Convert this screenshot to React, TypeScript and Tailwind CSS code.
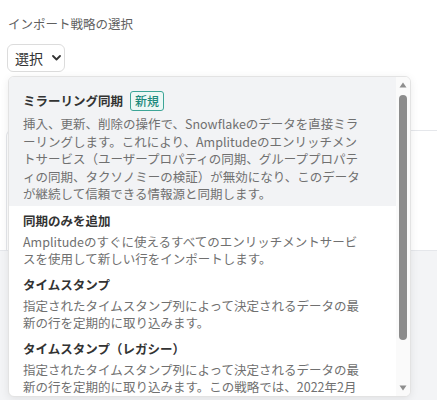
const strategies = [
  {
    id: "mirror",
    name: "ミラーリング同期",
    badge: "新規",
    description:
      "挿入、更新、削除の操作で、Snowflakeのデータを直接ミラーリングします。これにより、Amplitudeのエンリッチメントサービス（ユーザープロパティの同期、グループプロパティの同期、タクソノミーの検証）が無効になり、このデータが継続して信頼できる情報源と同期します。",
  },
  {
    id: "append",
    name: "同期のみを追加",
    description:
      "Amplitudeのすぐに使えるすべてのエンリッチメントサービスを使用して新しい行をインポートします。",
  },
  {
    id: "timestamp",
    name: "タイムスタンプ",
    description:
      "指定されたタイムスタンプ列によって決定されるデータの最新の行を定期的に取り込みます。",
  },
  {
    id: "legacy",
    name: "タイムスタンプ（レガシー）",
    description:
      "指定されたタイムスタンプ列によって決定されるデータの最新の行を定期的に取り込みます。この戦略では、2022年2月以前に作成されたインポートと同じように動作します。",
  },
];

const Arrow = ({ down }: { down?: boolean }) => (
  <svg width="8" height="6" viewBox="0 0 8 6" className="shrink-0">
    <path d={down ? "M0.5 0.5h7L4 5.5z" : "M0.5 5.5h7L4 0.5z"} fill="#8e8e8e" />
  </svg>
);

export default function App() {
  return (
    <div className="min-h-[400px] bg-white font-['Noto_Sans_CJK_JP',sans-serif] text-[#333]">
      <div className="px-2 pt-[15px]">
        <p className="text-[12.5px] leading-[18px] text-[#5f5f5f]">
          インポート戦略の選択
        </p>
        <div className="relative mt-[11px] inline-block -ml-px">
          <button className="flex h-[28px] w-[58px] items-center gap-[9px] rounded-md border border-[#dcdcdc] bg-white pl-[7px] text-[14px] text-[#333]">
            選択
            <svg width="9" height="6" viewBox="0 0 9 6" fill="none">
              <path
                d="M1 1l3.5 3.5L8 1"
                stroke="#333"
                strokeWidth="1.8"
                strokeLinecap="round"
                strokeLinejoin="round"
              />
            </svg>
          </button>

          <div className="absolute left-px top-full z-10 mt-1 flex h-[321px] w-[403px] overflow-hidden rounded-md border border-[#e3e3e3] bg-white shadow-[0_2px_8px_rgba(0,0,0,0.08)]">
            <div className="flex-1 overflow-hidden">
              {strategies.map((item, i) => (
                <div
                  key={item.id}
                  className={
                    i === 0
                      ? "bg-[#f2f3f5] px-[14px] pb-[3px] pt-[12px]"
                      : "px-[14px] pb-[2px] pt-[5px]"
                  }
                >
                  <div
                    className={
                      i === 0
                        ? "flex h-[24px] items-center gap-[7px]"
                        : "flex h-[20px] items-center gap-[7px]"
                    }
                  >
                    <span className="text-[12.5px] font-bold leading-[20px] text-[#333]">
                      {item.name}
                    </span>
                    {item.badge && (
                      <span className="rounded-[3px] border border-[#3da597] bg-[#ecf8f5] px-[4px] text-[12px] font-medium leading-[18px] text-[#1d8a7c]">
                        {item.badge}
                      </span>
                    )}
                  </div>
                  <p className="mt-[2px] w-[340px] text-[12.5px] leading-[17.5px] text-[#707070]">
                    {item.description}
                  </p>
                </div>
              ))}
            </div>

            <div className="flex w-[14px] flex-col items-center bg-[#fafafa] pb-[5px] pt-[5px]">
              <Arrow />
              <div className="mt-[7px] h-[245px] w-[8px] rounded-full bg-[#8c8c8c]" />
              <div className="flex-1" />
              <Arrow down />
            </div>
          </div>
        </div>
      </div>

      <div className="ml-[6px] mt-[58px] h-[120px] rounded-tl-md border-l border-t border-[#e5e7eb]" />
      <div className="h-[150px] border-t border-[#e5e7eb] bg-[#f3f4f6]" />
    </div>
  );
}
